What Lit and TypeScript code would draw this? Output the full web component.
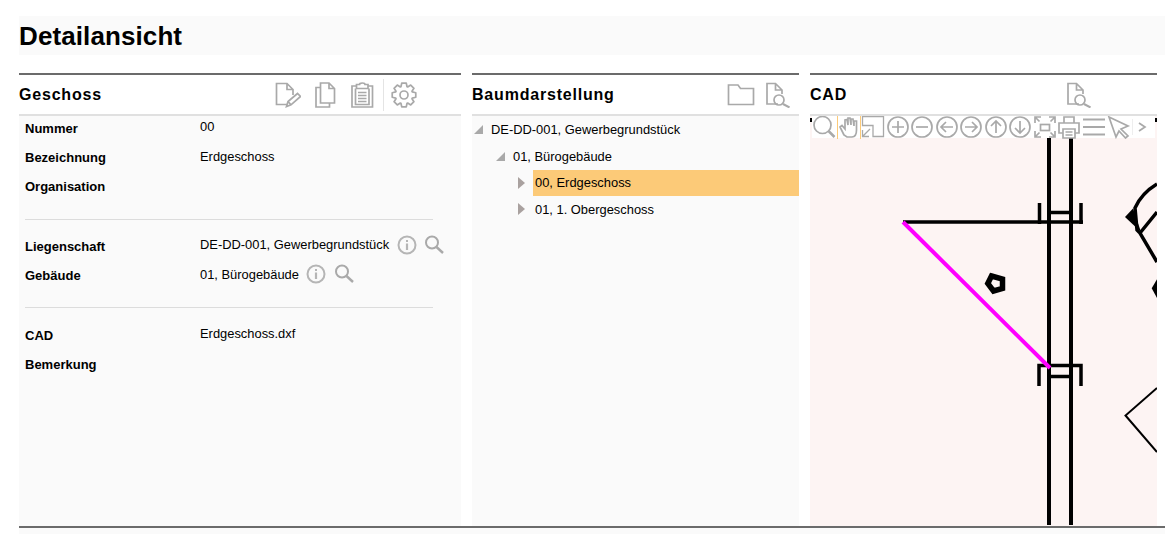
import { LitElement, html, css, svg } from "lit";
import { customElement } from "lit/decorators.js";

const ic = (w: number, h: number, body: unknown, cls = "") =>
  html`<svg class=${cls} width=${w} height=${h} viewBox="0 0 ${w} ${h}" fill="none" stroke="#a9a9a9" stroke-width="1.7">${body}</svg>`;

const docSearch = ic(26, 26, svg`<path d="M13 22H2V1.500H10.500L17 8V12M10.500 1.500V8H17"/><circle cx="14" cy="18" r="5"/><path stroke-width="2" d="M18 22L24.500 25.500"/>`);
const tbGlyph = (body: unknown, w = 24) => ic(w, 24, body);
const circled = (d: string) => svg`<circle cx="12" cy="12" r="10"/><path d=${d}/>`;

const gearPath = (() => {
  const pts: string[] = [];
  const teeth = 8;
  for (let k = 0; k < teeth; k++) {
    const a = (k * 2 * Math.PI) / teeth - Math.PI / 2;
    const step = (2 * Math.PI) / teeth;
    for (const [r, da] of [[8.8, -0.5], [12, -0.27], [12, 0.27], [8.8, 0.5]] as const) {
      const t = a + da * step * 0.9;
      pts.push(`${(13 + r * Math.cos(t)).toFixed(2)} ${(13 + r * Math.sin(t)).toFixed(2)}`);
    }
  }
  return "M" + pts.join("L") + "Z";
})();

@customElement("app-root")
export class AppRoot extends LitElement {
  static styles = css`
    :host { display: block; height: 534px; overflow: hidden; background: #fff; font-family: "Liberation Sans", Arial, sans-serif; font-size: 12.9px; color: #000; }
    .page { padding: 16px 0 0 19px; display: flex; flex-direction: column; }
    h1 { margin: 0; height: 39px; line-height: 41px; background: #fafafa; font-size: 26px; font-weight: 700; letter-spacing: .1px; }
    .cols { display: flex; gap: 11px; margin-top: 18px; height: 453px; padding-right: 8px; }
    .panel { display: flex; flex-direction: column; border-top: 2px solid #6b6b6b; }
    .p1 { width: 442px; } .p2 { width: 327px; } .p3 { width: 347px; }
    .head { height: 39px; flex: none; display: flex; align-items: center; border-bottom: 2px solid #e0e0e0; position: relative; }
    h2 { margin: 0; font-size: 16px; font-weight: 700; letter-spacing: .8px; }
    .tools { display: flex; align-items: center; position: absolute; top: 0; height: 39px; }
    .gap11 { width: 10px; } .gap13 { width: 13px; } .gap14 { width: 14px; }
    .sep { width: 1px; height: 32px; background: #e4e4e4; margin: 0 7.500px 0 8.500px; }
    .body { flex: 1; background: #fafafa; }
    .tree { padding-top: .5px; }
    .form { padding: 0 28px 0 6px; margin-top: -3px; }
    .row { display: grid; grid-template-columns: 175px 1fr; height: 29.400px; align-items: center; }
    .row b { font-weight: 700; font-size: 13px; position: relative; top: .4px; }
    .row span { display: flex; align-items: center; gap: 7.500px; position: relative; top: -1px; white-space: nowrap; }
    .row svg { flex: none; }
    hr { border: 0; border-top: 1px solid #dcdcdc; margin: 17.500px 0 11.500px; }
    .node { display: flex; align-items: center; height: 26.500px; }
    .l0 { padding-left: 2px; } .l1 { padding-left: 24px; } .l2 { padding-left: 46px; }
    .arrow { flex: none; width: 0; height: 0; }
    .open { border-left: 9px solid transparent; border-bottom: 9px solid #a9a9a9; margin-right: 8px; }
    .closed { border-top: 6px solid transparent; border-bottom: 6px solid transparent; border-left: 7px solid #a9a19f; margin-right: 8px; }
    .sel { background: #fcca78; flex: 1; height: 26px; line-height: 25.500px; margin-top: .5px; padding-left: 2px; }
    .plain { padding-left: 2px; }
    .cad { flex: 1; background: #fdf4f3; position: relative; overflow: hidden; }
    .toolbar { position: absolute; left: 2px; right: 2px; top: 0; height: 22px; display: flex; align-items: center; background: #fff; }
    .toolbar svg { margin-right: .55px; flex: none; }
    .toolbar .hand { box-shadow: inset 1px 0 #fcca78, inset -1px 0 #fcca78; }
    .tsep { width: 1px; height: 16px; background: #eee; margin: 0 4px 0 1px; flex: none; }
    .canvas { position: absolute; left: 0; top: 0; }
    .foot { border-top: 2px solid #6b6b6b; height: 6px; background: #fafafa; }
  `;

  render() {
    return html`<div class="page">
      <h1>Detailansicht</h1>
      <div class="cols">
        <section class="panel p1">
          <div class="head"><h2>Geschoss</h2>
            <div class="tools" style="left:256px">
              ${ic(26, 26, svg`<path d="M12 22.500H1.500V1.500H12L18 7.500V13M12 1.500V7.500H18"/><path d="M11.500 24.500L13 19.500L22.500 11.500L25.500 14.500L16 22.800ZM13 19.500L16 22.800"/>`)}
              <span class="gap13"></span>
              ${ic(22, 26, svg`<path d="M6.500 21V1H15L20.500 6.500V21ZM15 1V6.500H20.500M6.500 5.500H2V25H15.500V21"/>`)}
              <span class="gap14"></span>
              ${ic(24, 26, svg`<path d="M6 4H2V25H22.500V4H18.500M6.500 2.500H9.500C9.500 0.500 15 0.500 15 2.500H18V6.500H6.500ZM5.500 6.500V22.500H19V6.500M8 10.500H16.500M8 13.500H16.500M8 16.500H16.500M8 19.500H16.500"/>`)}
              <span class="sep"></span>
              ${ic(26, 26, svg`<circle cx="13" cy="13" r="4"/><path stroke-linejoin="round" d=${gearPath}/>`)}
            </div>
          </div>
          <div class="body"><div class="form">
            <div class="row"><b>Nummer</b><span>00</span></div>
            <div class="row"><b>Bezeichnung</b><span>Erdgeschoss</span></div>
            <div class="row"><b>Organisation</b><span></span></div>
            <hr />
            <div class="row"><b>Liegenschaft</b><span>DE-DD-001, Gewerbegrundstück ${this.info()} ${this.mag()}</span></div>
            <div class="row"><b>Gebäude</b><span>01, Bürogebäude ${this.info()} ${this.mag()}</span></div>
            <hr />
            <div class="row"><b>CAD</b><span>Erdgeschoss.dxf</span></div>
            <div class="row"><b>Bemerkung</b><span></span></div>
          </div></div>
        </section>
        <section class="panel p2">
          <div class="head"><h2>Baumdarstellung</h2>
            <div class="tools" style="left:255px">
              ${ic(28, 24, svg`<path d="M1.500 21.500V2H11L13.500 5.500H26.500V21.500Z"/>`)}
              <span class="gap11"></span>
              ${docSearch}
            </div>
          </div>
          <div class="body tree">
            <div class="node l0"><i class="arrow open"></i>DE-DD-001, Gewerbegrundstück</div>
            <div class="node l1"><i class="arrow open"></i>01, Bürogebäude</div>
            <div class="node l2"><i class="arrow closed"></i><div class="sel">00, Erdgeschoss</div></div>
            <div class="node l2"><i class="arrow closed"></i><div class="plain">01, 1. Obergeschoss</div></div>
          </div>
        </section>
        <section class="panel p3">
          <div class="head"><h2>CAD</h2>
            <div class="tools" style="left:256px">${docSearch}</div>
          </div>
          <div class="cad">
            ${this.drawing()}
            <div class="toolbar">
              ${tbGlyph(svg`<circle cx="10.500" cy="10" r="8.500"/><path stroke-width="2.500" d="M16.500 16L22.500 22"/>`)}
              ${ic(24, 24, svg`<path d="M7 20L3 12L5 10.500L8 14V5L10 4.500L11 10V3L13 3L14 10V4H16L17 11V6H19.500V15C19.500 19 18 22 15 22H10Z"/>`, "hand")}
              ${tbGlyph(svg`<path d="M1.500 1.500H22.500V21.500H12V10.500H1.500ZM1.500 21.500L9 14M1.500 15V21.500H8" stroke-width="1.300"/>`)}
              ${tbGlyph(circled("M6 12H18M12 6V18"))}
              ${tbGlyph(circled("M6 12H18"))}
              ${tbGlyph(circled("M18 12H6M11 7L6 12L11 17"))}
              ${tbGlyph(circled("M6 12H18M13 7L18 12L13 17"))}
              ${tbGlyph(circled("M12 18V6M7 11L12 6L17 11"))}
              ${tbGlyph(circled("M12 6V18M7 13L12 18L17 13"))}
              ${tbGlyph(svg`<rect x="7.500" y="9.500" width="9" height="6"/><path d="M2 8V2H8M2 2L6.500 6.500M16 2H22V8M22 2L17.500 6.500M2 16V22H8M2 22L6.500 17.500M22 16V22H16M22 22L17.500 17.500"/>`)}
              ${tbGlyph(svg`<path d="M7 8V2H17V8M6 18H2V8H22V18H18M6 14H18V23H6ZM8.500 17H15.500M8.500 20H15.500"/>`)}
              ${tbGlyph(svg`<path stroke-width="2" d="M1 4.500H23M1 12H23M1 19.500H23"/>`)}
              ${tbGlyph(svg`<path d="M2 2L21 11L14 14L21 21L18.500 23L12 16L9 22Z"/>`)}
              <span class="tsep"></span>
              ${ic(10, 24, svg`<path d="M2 8L8 12L2 16"/>`)}
            </div>
          </div>
        </section>
      </div>
      <div class="foot"></div>
    </div>`;
  }

  info() {
    return ic(20, 20, svg`<circle cx="10" cy="10" r="8.500" stroke-width="2" stroke="#b5b5b5"/><path d="M10 8.500V15" stroke-width="2.200" stroke="#b5b5b5"/><path d="M10 5V7" stroke-width="2" stroke="#b5b5b5"/>`);
  }
  mag() {
    return ic(20, 20, svg`<circle cx="8" cy="7.500" r="6" stroke-width="2"/><path stroke-width="2.400" d="M12.500 12L19 18"/>`);
  }
  drawing() {
    return html`<svg class="canvas" width="347" height="410" viewBox="810 116 347 410" fill="none" stroke="#000">
      <path stroke-width="2" d="M811 118V122M1156 118V122"/>
      <path stroke-width="4" d="M1049 138V525M1071 138V525"/>
      <path stroke-width="3.500" d="M903 222H1083M1039.500 203V224M1081 203V224M1049 212.500H1071"/>
      <path stroke-width="3.500" d="M1039 386V365.500H1081V386M1049 376.500H1071"/>
      <path stroke="#f0f" stroke-width="4" d="M903 222L1050 368"/>
      <path stroke-width="5.500" d="M991.500 276L1002.500 279L1002.500 288.500L993.500 291L987.800 283.500Z"/>
      <path stroke-width="3.500" d="M1157 184C1147 190 1139 199 1135 208L1137 230L1140 233L1157 262M1140 233L1157 212"/>
      <path fill="#000" stroke="none" d="M1125 217L1133 208.500L1141 232Z"/>
      <path fill="#000" stroke="none" d="M1151.700 288.300L1157 279.300V298Z"/>
      <path stroke-width="2" d="M1157 388L1125.500 415.500L1157 452"/>
    </svg>`;
  }
}
